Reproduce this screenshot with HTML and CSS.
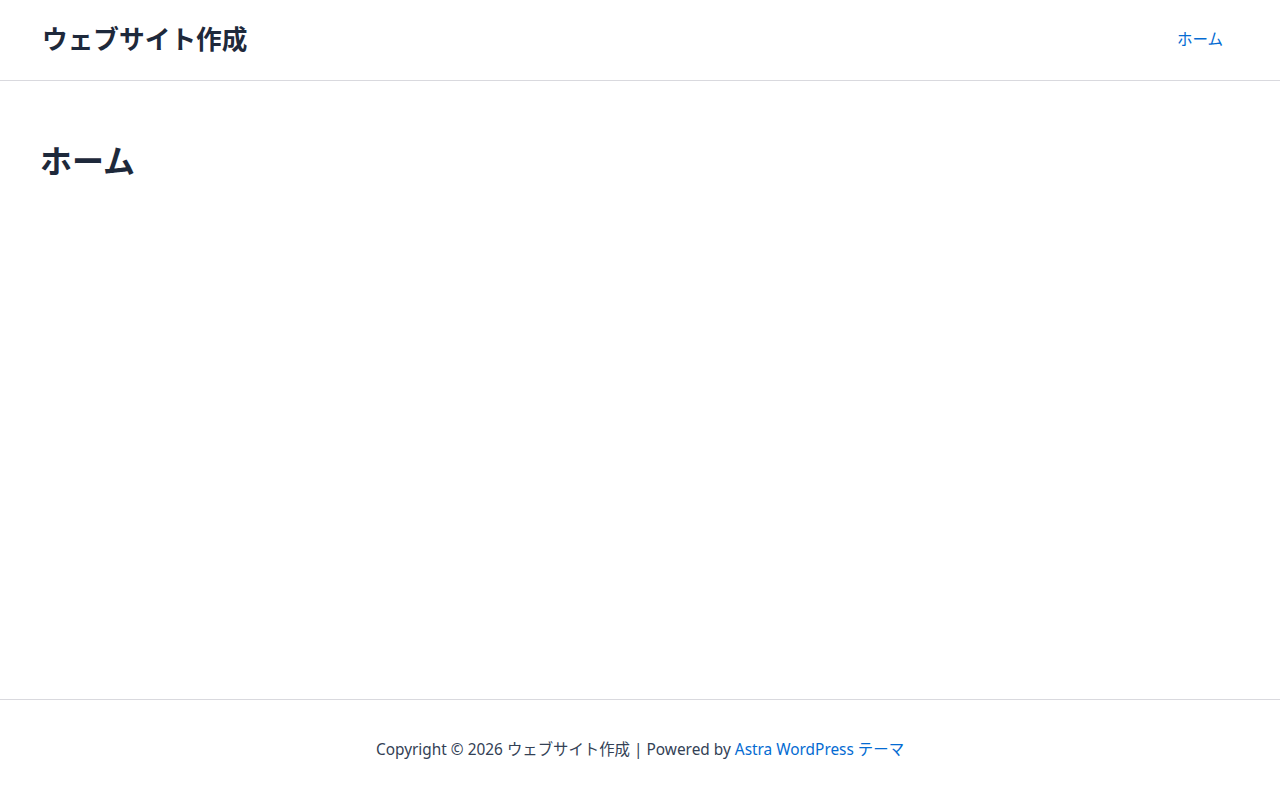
FILE: index.html
```html
<!DOCTYPE html>
<html lang="ja">
<head>
<meta charset="utf-8">
<title>ウェブサイト作成</title>
<link rel="stylesheet" href="styles.css">
</head>
<body>
<div class="page">
  <header class="site-header">
    <div class="site-title">ウェブサイト作成</div>
    <nav class="main-nav">
      <a class="nav-link" href="#">ホーム</a>
    </nav>
  </header>
  <main class="site-content">
    <h1 class="entry-title">ホーム</h1>
  </main>
  <footer class="site-footer">
    <p class="copyright">Copyright © 2026 <span class="site-name">ウェブサイト作成</span> | Powered by <a class="footer-link" href="#">Astra WordPress テーマ</a></p>
  </footer>
</div>
</body>
</html>
```
FILE: styles.css
```css
html, body {
  margin: 0;
  padding: 0;
  background: #ffffff;
}
body {
  font-family: "Noto Sans", "Noto Sans CJK JP", sans-serif;
  color: #334155;
  font-size: 15px;
}
.page {
  min-height: 800px;
  display: flex;
  flex-direction: column;
}
.site-header {
  height: 81px;
  box-sizing: border-box;
  border-bottom: 1px solid #d9d9de;
  display: flex;
  align-items: center;
  justify-content: space-between;
  padding: 0 40px 4px 42px;
}
.site-title {
  font-family: "Noto Sans CJK JP", sans-serif;
  font-size: 25.7px;
  font-weight: 700;
  color: #1e293b;
  line-height: 1.2;
}
.main-nav {
  display: flex;
  align-items: center;
}
.nav-link {
  font-family: "Noto Sans CJK JP", sans-serif;
  color: #046bd2;
  text-decoration: none;
  font-size: 15.5px;
  line-height: 1.2;
  padding: 0 17px 0 15px;
}
.site-content {
  flex: 1;
  padding: 0 40px;
}
.entry-title {
  font-family: "Noto Sans CJK JP", sans-serif;
  font-size: 32px;
  font-weight: 700;
  color: #1e293b;
  margin: 56px 0 0 0;
  line-height: 1.4;
}
.site-footer {
  border-top: 1px solid #d9d9de;
  height: 101px;
  box-sizing: border-box;
  padding-bottom: 3px;
  display: flex;
  align-items: center;
  justify-content: center;
}
.copyright {
  margin: 0;
  font-size: 15.4px;
  color: #334155;
}
.site-name {
  font-family: "Noto Sans CJK JP", sans-serif;
}
.footer-link {
  color: #046bd2;
  text-decoration: none;
}
```
